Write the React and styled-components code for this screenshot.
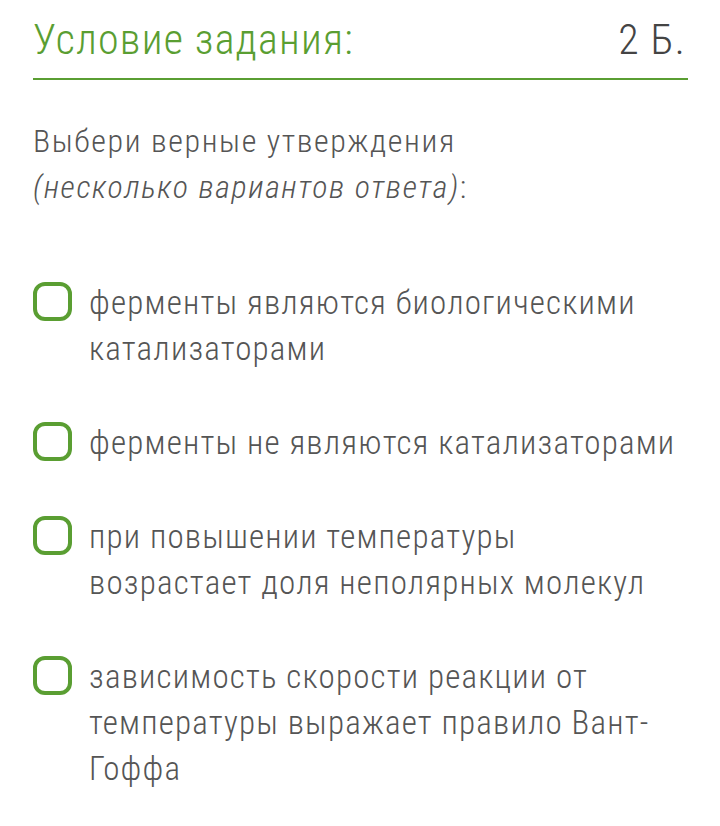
import React from 'react'
import styled, { createGlobalStyle } from 'styled-components'

const GlobalStyle = createGlobalStyle`
  html, body {
    margin: 0;
    padding: 0;
    background: #fff;
  }
  body {
    font-family: Roboto, "Noto Sans", sans-serif;
    font-weight: 300;
    font-stretch: 75%;
  }
`

const options = [
  'ферменты являются биологическими катализаторами',
  'ферменты не являются катализаторами',
  'при повышении температуры возрастает доля неполярных молекул',
  'зависимость скорости реакции от температуры выражает правило Вант-Гоффа',
]

const App = () => {
  return (
    <>
      <GlobalStyle />
      <Page>
        <Header>
          <Title>Условие задания:</Title>
          <Points>2 Б.</Points>
        </Header>
        <Question>
          Выбери верные утверждения
          <br />
          <Hint>(несколько вариантов ответа)</Hint>:
        </Question>
        <OptionList>
          {options.map((text) => (
            <Option key={text}>
              <Box />
              <OptionText>{text}</OptionText>
            </Option>
          ))}
        </OptionList>
      </Page>
    </>
  )
}

export default App

const Page = styled.div`
  padding: 12px 30px 0 33px;
  color: #555;
`

const Header = styled.div`
  display: flex;
  justify-content: space-between;
  align-items: baseline;
  border-bottom: 2px solid #5a9e32;
  padding-bottom: 10px;
  margin-right: 2px;
`

const Title = styled.h1`
  margin: 0;
  font-size: 42px;
  font-weight: 300;
  line-height: 56px;
  letter-spacing: 1.2px;
  color: #5a9e32;
`

const Points = styled.span`
  font-size: 42px;
  line-height: 56px;
  letter-spacing: 1.2px;
  color: #444;
  margin-right: 2px;
`

const Question = styled.p`
  margin: 38px 0 0;
  font-size: 32px;
  line-height: 46px;
  letter-spacing: 1.6px;
`

const Hint = styled.i`
  font-style: italic;
`

const OptionList = styled.ul`
  list-style: none;
  margin: 70px 0 0;
  padding: 0;
  display: flex;
  flex-direction: column;
  gap: 48px;
`

const Option = styled.li`
  display: flex;
  align-items: flex-start;
  gap: 17px;
`

const Box = styled.span`
  flex-shrink: 0;
  width: 31px;
  height: 31px;
  margin-top: 2px;
  border: 4px solid #5a9e32;
  border-radius: 12px;
`

const OptionText = styled.span`
  max-width: 591px;
  font-size: 33px;
  line-height: 46px;
  letter-spacing: 1.2px;
`
